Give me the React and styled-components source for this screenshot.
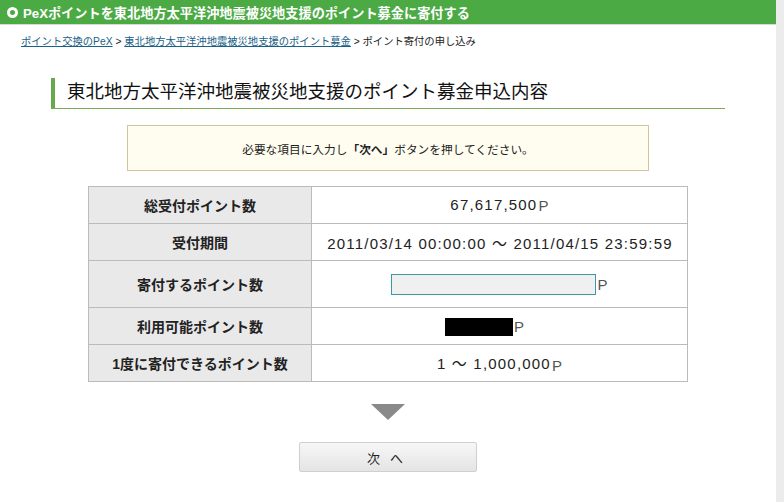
import React from 'react'
import styled, { createGlobalStyle } from 'styled-components'

const GlobalStyle = createGlobalStyle`
    html, body {
        margin: 0;
        padding: 0;
        background: #ececec;
        font-family: "Liberation Sans", "Noto Sans CJK JP", sans-serif;
        color: #222;
    }
`

const Page = styled.div`
    width: 776px;
    min-height: 502px;
    background: #fff;
`

const Header = styled.div`
    height: 24px;
    background: #4caa45;
    border-bottom: 1px solid #d8d8d8;
    display: flex;
    align-items: center;
    padding-left: 7px;
    gap: 5px;
    color: #fff;
    font-size: 13.2px;
    font-weight: bold;
`

const Ring = styled.span`
    width: 5px;
    height: 5px;
    border: 3px solid #fff;
    border-radius: 50%;
`

const Crumbs = styled.div`
    padding: 7px 0 0 21px;
    height: 20px;
    font-size: 10.3px;
    line-height: 20px;
    color: #222;
`

const CrumbLink = styled.a`
    color: #1a5f86;
    text-decoration: underline;
`

const Content = styled.div`
    padding: 26px 51px 0 51px;
    width: 674px;
`

const Heading = styled.h2`
    margin: 0;
    height: 30px;
    border-left: 4px solid #6aa84f;
    border-bottom: 1px solid #7aaa5a;
    padding-left: 12px;
    font-size: 18.5px;
    font-weight: normal;
    line-height: 28px;
    color: #111;
`

const Notice = styled.div`
    margin: 16px auto 0;
    width: 520px;
    height: 44px;
    background: #fffdf0;
    border: 1px solid #d4c49a;
    display: flex;
    align-items: center;
    justify-content: center;
    font-size: 11.7px;
    color: #222;
`

const Table = styled.table`
    margin: 15px auto 0;
    width: 600px;
    border-collapse: collapse;
`

const Row = styled.tr`
    height: ${props => props.tall ? '47px' : '37px'};
`

const Label = styled.th`
    width: 220px;
    background: #e9e9e9;
    border: 1px solid #bbb;
    font-size: 14px;
    font-weight: bold;
    color: #222;
`

const Value = styled.td`
    border: 1px solid #bbb;
    text-align: center;
    font-size: 15px;
    letter-spacing: 1.2px;
    color: #222;
    padding-right: ${props => props.shift || 0}px;
`

const Input = styled.input`
    width: 199px;
    height: 17px;
    border: 1px solid #3a9aa0;
    background: #f0f0f0;
    vertical-align: middle;
    padding: 1px 2px;
    margin: 0;
`

const Unit = styled.span`
    color: #555;
    vertical-align: middle;
    margin-left: 1px;
`

const Masked = styled.span`
    display: inline-block;
    width: 68px;
    height: 18px;
    background: #000;
    vertical-align: middle;
`

const Footer = styled.div`
    display: flex;
    flex-direction: column;
    align-items: center;
    padding-top: 22px;
    gap: 22px;
`

const Arrow = styled.div`
    width: 0;
    height: 0;
    border-left: 17px solid transparent;
    border-right: 17px solid transparent;
    border-top: 16px solid #8a8a8a;
`

const NextButton = styled.button`
    width: 178px;
    height: 30px;
    border: 1px solid #cfcfcf;
    border-radius: 2px;
    background: linear-gradient(#f7f7f7, #e4e4e4);
    font-family: "Noto Sans CJK JP", sans-serif;
    font-size: 13px;
    color: #222;
    letter-spacing: 10px;
    padding-left: 10px;
`

const App = () => (
    <>
        <GlobalStyle />
        <Page>
            <Header>
                <Ring />
                PeXポイントを東北地方太平洋沖地震被災地支援のポイント募金に寄付する
            </Header>
            <Crumbs>
                <CrumbLink href="#">ポイント交換のPeX</CrumbLink> &gt; <CrumbLink href="#">東北地方太平洋沖地震被災地支援のポイント募金</CrumbLink> &gt; ポイント寄付の申し込み
            </Crumbs>
            <Content>
                <Heading>東北地方太平洋沖地震被災地支援のポイント募金申込内容</Heading>
                <Notice>必要な項目に入力し<b>「次へ」</b>ボタンを押してください。</Notice>
                <Table>
                    <tbody>
                        <Row>
                            <Label>総受付ポイント数</Label>
                            <Value>67,617,500<Unit>P</Unit></Value>
                        </Row>
                        <Row>
                            <Label>受付期間</Label>
                            <Value>2011/03/14 00:00:00 〜 2011/04/15 23:59:59</Value>
                        </Row>
                        <Row tall>
                            <Label>寄付するポイント数</Label>
                            <Value><Input type="text" /><Unit>P</Unit></Value>
                        </Row>
                        <Row>
                            <Label>利用可能ポイント数</Label>
                            <Value shift={30}><Masked /><Unit>P</Unit></Value>
                        </Row>
                        <Row>
                            <Label>1度に寄付できるポイント数</Label>
                            <Value>1 〜 1,000,000<Unit>P</Unit></Value>
                        </Row>
                    </tbody>
                </Table>
            </Content>
            <Footer>
                <Arrow />
                <NextButton>次へ</NextButton>
            </Footer>
        </Page>
    </>
)

export default App
